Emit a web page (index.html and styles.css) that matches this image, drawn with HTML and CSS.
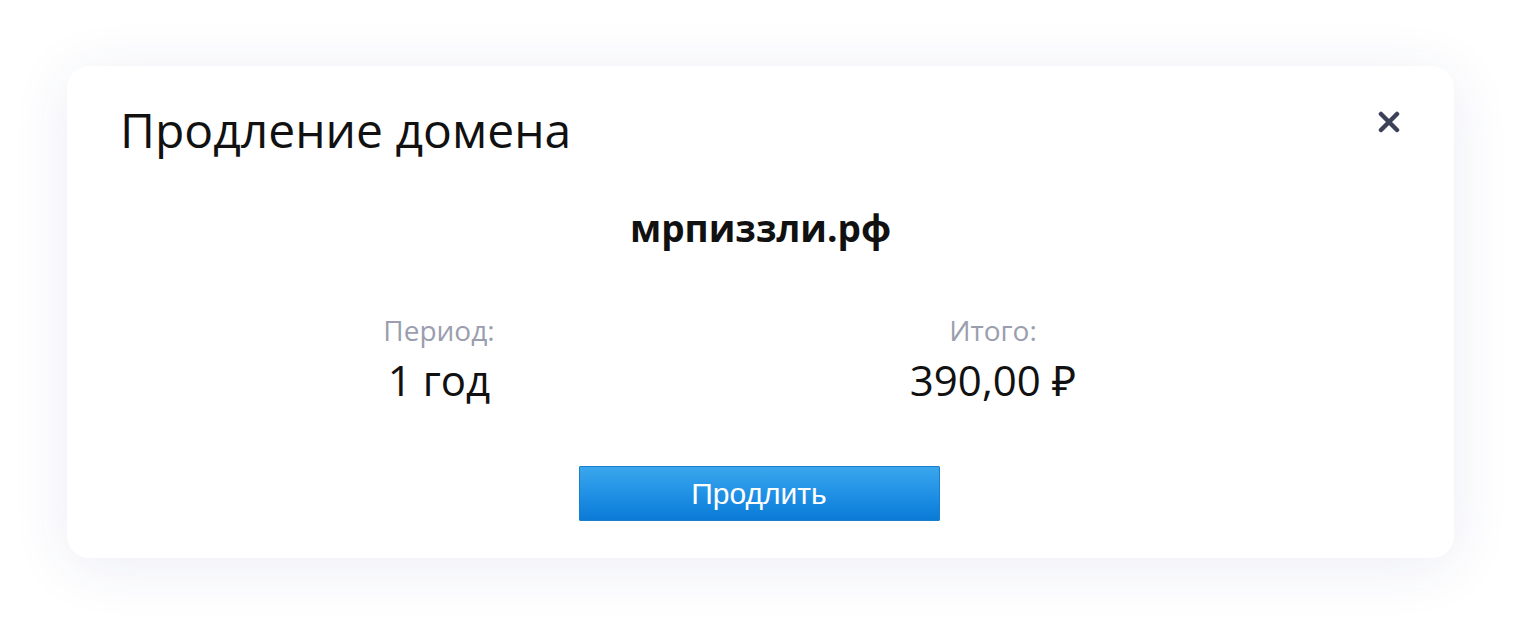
FILE: index.html
```html
<!DOCTYPE html>
<html lang="ru">

<head>
    <meta charset="UTF-8">
    <meta name="viewport" content="width=device-width, initial-scale=1.0">
    <title>Продление домена</title>
    <link rel="stylesheet" href="styles.css">
</head>

<body>
    <div class="modal">
        <div class="modal-header">
            <h1>Продление домена</h1>
            <button class="close" aria-label="Закрыть">
                <svg width="22" height="22" viewBox="0 0 22 22">
                    <path d="M3 3 L19 19 M19 3 L3 19" stroke="#3c4158" stroke-width="4.5" stroke-linecap="round"/>
                </svg>
            </button>
        </div>

        <div class="domain">мрпиззли.рф</div>

        <div class="summary">
            <div class="summary-item">
                <div class="label">Период:</div>
                <div class="value">1 год</div>
            </div>
            <div class="summary-item">
                <div class="label">Итого:</div>
                <div class="value">390,00 ₽</div>
            </div>
        </div>

        <div class="actions">
            <button class="btn-renew">Продлить</button>
        </div>
    </div>
</body>

</html>
```

FILE: styles.css
```css
body {
    font-family: "Open Sans", "Noto Sans", sans-serif;
    margin: 0;
    padding: 66px 67px;
    background-color: #fff;
    color: #111;
}

.modal {
    background: white;
    border-radius: 22px;
    padding: 36px 53px 37px;
    box-shadow: 0 8px 60px rgba(40, 60, 140, 0.09);
}

.modal-header {
    display: flex;
    justify-content: space-between;
    align-items: flex-start;
}

h1 {
    margin: 0;
    font-weight: 400;
    font-size: 48px;
    line-height: 56px;
    color: #111;
}

.close {
    background: none;
    border: none;
    padding: 0;
    margin: 9px 1px 0 0;
    cursor: pointer;
    width: 22px;
    height: 22px;
}

.domain {
    text-align: center;
    font-weight: 700;
    font-size: 37px;
    line-height: 48px;
    margin-top: 46px;
}

.summary {
    display: grid;
    grid-template-columns: 554px 554px;
    margin: 61px 0 0 42px;
    text-align: center;
}

.label {
    color: #9a9eae;
    font-size: 28px;
    line-height: 34px;
}

.value {
    font-size: 42px;
    line-height: 50px;
    margin-top: 8px;
}

.actions {
    display: flex;
    justify-content: center;
    margin-top: 61px;
    padding-right: 3px;
}

.btn-renew {
    width: 361px;
    height: 55px;
    font-family: "Liberation Sans", Arial, sans-serif;
    font-size: 30px;
    color: white;
    border: 1px solid #1b7ec9;
    border-radius: 1px;
    background: linear-gradient(to bottom, #3aa6ec 0%, #1e8fe4 55%, #0a7ad6 100%);
    cursor: pointer;
}
```
